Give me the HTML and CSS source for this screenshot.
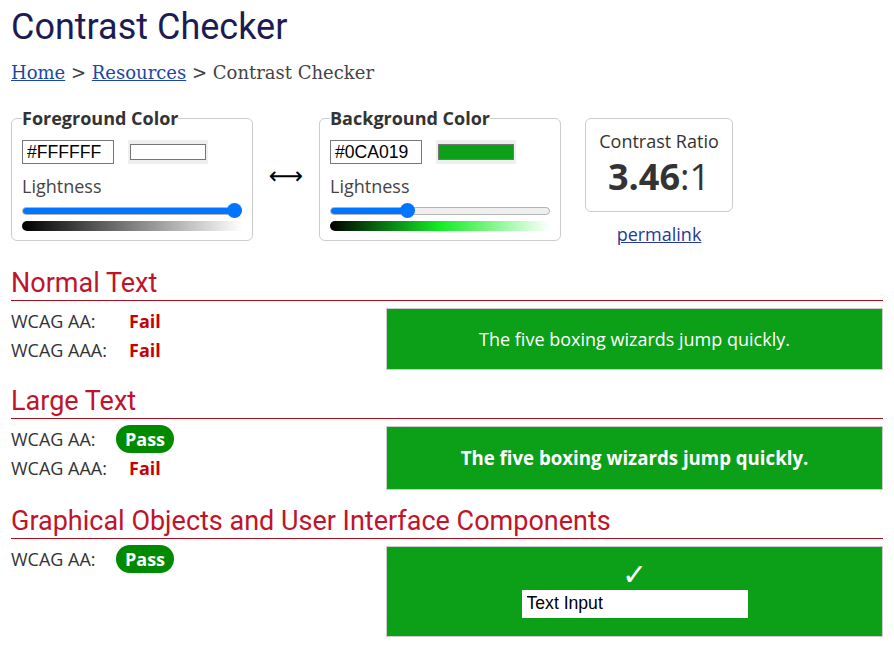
FILE: index.html
```html
<!DOCTYPE html>
<html lang="en">
<head>
<meta charset="utf-8">
<title>Contrast Checker</title>
<link rel="stylesheet" href="styles.css">
</head>
<body>
<h1 class="title">Contrast Checker</h1>
<nav class="crumbs"><a href="#">Home</a> &gt; <a href="#">Resources</a> &gt; Contrast Checker</nav>

<div class="controls">
  <fieldset class="picker">
    <legend>Foreground Color</legend>
    <div class="hex-row">
      <input class="hex" type="text" value="#FFFFFF">
      <div class="swatch"><div class="swatch-inner" style="background:#ffffff"></div></div>
    </div>
    <div class="light-label">Lightness</div>
    <div class="slider">
      <div class="track"><div class="fill" style="width:100%"></div></div>
      <div class="thumb" style="left:205px"></div>
    </div>
    <div class="grad grad-fg"></div>
  </fieldset>

  <div class="swap">&#10231;</div>

  <fieldset class="picker">
    <legend>Background Color</legend>
    <div class="hex-row">
      <input class="hex" type="text" value="#0CA019">
      <div class="swatch"><div class="swatch-inner" style="background:#0ca019"></div></div>
    </div>
    <div class="light-label">Lightness</div>
    <div class="slider">
      <div class="track"><div class="fill" style="width:77px"></div></div>
      <div class="thumb" style="left:70px"></div>
    </div>
    <div class="grad grad-bg"></div>
  </fieldset>

  <div class="ratio-col">
    <div class="ratio-box">
      <div class="ratio-label">Contrast Ratio</div>
      <div class="ratio-value"><b>3.46</b>:1</div>
    </div>
    <a class="permalink" href="#">permalink</a>
  </div>
</div>

<section class="result">
  <h2 class="sec-title">Normal Text</h2>
  <div class="sec-grid">
    <div class="checks">
      <div class="check-row"><span class="lbl">WCAG AA:</span><span class="fail">Fail</span></div>
      <div class="check-row"><span class="lbl">WCAG AAA:</span><span class="fail">Fail</span></div>
    </div>
    <div class="sample sample-normal">The five boxing wizards jump quickly.</div>
  </div>
</section>

<section class="result">
  <h2 class="sec-title">Large Text</h2>
  <div class="sec-grid">
    <div class="checks">
      <div class="check-row"><span class="lbl">WCAG AA:</span><span class="pass">Pass</span></div>
      <div class="check-row"><span class="lbl">WCAG AAA:</span><span class="fail">Fail</span></div>
    </div>
    <div class="sample sample-large">The five boxing wizards jump quickly.</div>
  </div>
</section>

<section class="result">
  <h2 class="sec-title">Graphical Objects and User Interface Components</h2>
  <div class="sec-grid">
    <div class="checks">
      <div class="check-row"><span class="lbl">WCAG AA:</span><span class="pass">Pass</span></div>
    </div>
    <div class="sample sample-ui">
      <div class="tick">&#10003;</div>
      <input class="ui-input" type="text" value="Text Input">
    </div>
  </div>
</section>
</body>
</html>
```
FILE: styles.css
```css
html, body { background: #fff; }
body {
  margin: 0 11px;
  font-family: "Open Sans", sans-serif;
  font-size: 18px;
  color: #333;
}
.title {
  margin: 6px 0 0;
  font-family: Roboto, sans-serif;
  font-weight: 400;
  font-size: 36px;
  line-height: 42px;
  color: #1c1c55;
}
.crumbs {
  margin-top: 14px;
  font-family: "DejaVu Serif", serif;
  font-size: 18px;
  line-height: 21px;
  color: #444;
}
.crumbs a { color: #1d47a3; }

.controls {
  display: flex;
  align-items: flex-start;
  margin-top: 24px;
}
.picker {
  margin: 0;
  width: 242px;
  box-sizing: border-box;
  padding: 0 10px 9px;
  border: 1px solid #ccc;
  border-radius: 6px;
}
.picker legend {
  padding: 0;
  font-weight: 700;
  line-height: 23px;
  color: #333;
}
.hex-row {
  display: flex;
  align-items: center;
  gap: 14px;
  margin-top: 10px;
}
.hex {
  width: 92px;
  height: 24px;
  box-sizing: border-box;
  margin: 0;
  padding: 0 4px;
  border: 1px solid #767676;
  border-radius: 0;
  font-family: "Liberation Sans", Arial, sans-serif;
  font-size: 17.6px;
  color: #000;
}
.swatch {
  width: 80px;
  height: 24px;
  box-sizing: border-box;
  padding: 4px 2px;
  background: #efefef;
}
.swatch-inner {
  height: 100%;
  box-sizing: border-box;
  border: 1px solid #767676;
}
.light-label {
  margin-top: 10px;
  line-height: 24px;
  color: #444;
}
.slider {
  position: relative;
  height: 16px;
  margin-top: 5px;
}
.track {
  position: relative;
  top: 4px;
  height: 8px;
  box-sizing: border-box;
  border: 1px solid #b5b5b5;
  border-radius: 4px;
  background: #efefef;
  overflow: hidden;
}
.fill {
  height: 100%;
  background: #0075ff;
  margin: -1px;
  padding: 1px 0;
}
.thumb {
  position: absolute;
  top: 0;
  width: 15px;
  height: 15px;
  border-radius: 50%;
  background: #0075ff;
}
.grad {
  height: 10px;
  margin-top: 2px;
  border-radius: 5px 0 0 5px;
}
.grad-fg { background: linear-gradient(to right, #000, #fff); }
.grad-bg { background: linear-gradient(to right, #000, hsl(125, 86%, 50%), #fff); }

.swap {
  align-self: center;
  width: 66px;
  text-align: center;
  font-family: "DejaVu Sans", sans-serif;
  font-size: 24px;
  line-height: 40px;
  color: #000;
}
.ratio-col {
  margin-left: 24px;
  margin-top: 10.5px;
  display: flex;
  flex-direction: column;
  align-items: center;
}
.ratio-box {
  width: 148px;
  box-sizing: border-box;
  padding: 10px 0;
  border: 1px solid #ccc;
  border-radius: 6px;
  text-align: center;
}
.ratio-label { line-height: 24px; }
.ratio-value { font-size: 36px; line-height: 48px; }
.ratio-value b { font-weight: 700; }
.permalink {
  margin-top: 10px;
  line-height: 24px;
  color: #26399c;
}

.result { margin-top: 22px; }
.result + .result { margin-top: 16px; }
.sec-title {
  margin: 0;
  padding-bottom: 1px;
  font-family: Roboto, sans-serif;
  font-weight: 400;
  font-size: 27px;
  line-height: 31px;
  color: #c0142b;
  border-bottom: 1px solid #a8101f;
}
.sec-grid {
  display: grid;
  grid-template-columns: 375px 1fr;
  margin-top: 6px;
}
.check-row {
  display: flex;
  align-items: center;
  height: 29px;
}
.lbl { width: 105px; }
.fail {
  padding-left: 13px;
  font-weight: 700;
  color: #c80000;
}
.pass {
  height: 28px;
  line-height: 28px;
  padding: 0 9px;
  border-radius: 14px;
  background: #008a00;
  color: #fff;
  font-weight: 700;
}
.sample {
  margin-top: 1px;
  border: 1px solid #ccc;
  background: #0ca019;
  color: #fff;
  text-align: center;
}
.sample-normal { padding: 18px 0; line-height: 24px; }
.sample-large { padding: 18px 0; line-height: 26px; font-size: 18.67px; font-weight: 700; }
.sample-ui {
  padding: 12px 0 18px;
  display: flex;
  flex-direction: column;
  align-items: center;
}
.tick {
  font-family: "DejaVu Sans", sans-serif;
  font-size: 30px;
  line-height: 31px;
}
.ui-input {
  width: 226px;
  height: 28px;
  box-sizing: border-box;
  margin: 0;
  padding: 0 5px;
  border: 0;
  background: #fff;
  font-family: "Liberation Sans", Arial, sans-serif;
  font-size: 17.6px;
  color: #000;
}
```
